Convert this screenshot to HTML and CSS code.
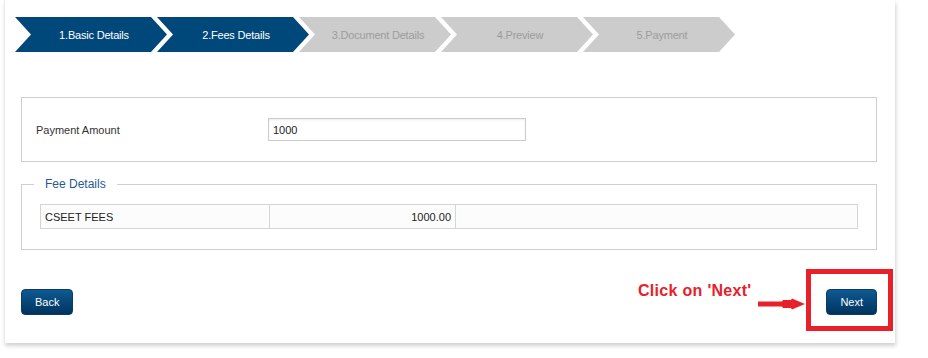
FILE: index.html
```html
<!DOCTYPE html>
<html>
<head>
<meta charset="utf-8">
<link rel="stylesheet" href="styles.css">
</head>
<body>
<div class="card">
  <div class="stepper">
    <div class="step done">1.Basic Details</div>
    <div class="step done">2.Fees Details</div>
    <div class="step">3.Document Details</div>
    <div class="step">4.Preview</div>
    <div class="step">5.Payment</div>
  </div>

  <div class="panel amount">
    <label class="amount-label">Payment Amount</label>
    <input class="amount-input" type="text" value="1000">
  </div>

  <fieldset class="fees">
    <legend class="fees-legend">Fee Details</legend>
    <table class="fees-table">
      <tr>
        <td class="c-name">CSEET FEES</td>
        <td class="c-amt">1000.00</td>
        <td class="c-extra"></td>
      </tr>
    </table>
  </fieldset>

  <div class="actions">
    <button class="btn">Back</button>
    <button class="btn">Next</button>
  </div>
</div>

<div class="callout-text">Click on 'Next'</div>
<svg class="callout-arrow" width="48" height="14" viewBox="0 0 48 14">
  <polygon points="0,4.5 24,4.5 25,3 33,3 34,1.5 47,7 34,12.5 33,11 25,11 24,9.5 0,9.5" fill="#e8202a"/>
</svg>
<div class="callout-box"></div>
</body>
</html>
```

FILE: styles.css
```css
html, body {
  margin: 0;
  padding: 0;
  background: #ffffff;
}

body {
  position: relative;
  width: 928px;
  height: 358px;
  overflow: hidden;
  font-family: "Liberation Sans", Arial, sans-serif;
  font-size: 11px;
  color: #333;
}

.card {
  box-sizing: border-box;
  width: 891px;
  margin-left: 4px;
  padding: 17px 18px 28px 16px;
  background: #fff;
  border-left: 1px solid #ececec;
  box-shadow: 1px 3px 4px rgba(0, 0, 0, 0.18);
}

/* stepper */
.stepper {
  display: flex;
  height: 35px;
  margin-left: -6px;
}

.step {
  width: 152px;
  height: 35px;
  flex: 0 0 152px;
  display: flex;
  align-items: center;
  justify-content: center;
  padding-left: 6px;
  box-sizing: border-box;
  background: #cccccc;
  color: #9c9c9c;
  font-size: 11px;
  letter-spacing: -0.2px;
  clip-path: polygon(0 0, 136px 0, 152px 50%, 136px 100%, 0 100%, 16px 50%);
}

.step + .step {
  margin-left: -10px;
}

.step.done {
  background: #00477a;
  color: #ffffff;
}

/* payment amount */
.panel {
  box-sizing: border-box;
  border: 1px solid #cfcfcf;
  margin-top: 45px;
}

.amount {
  height: 65px;
  display: flex;
  align-items: center;
  padding-left: 14px;
}

.amount-label {
  width: 232px;
  color: #333;
  font-size: 11px;
}

.amount-input {
  box-sizing: border-box;
  width: 258px;
  height: 23px;
  border: 1px solid #cccccc;
  box-shadow: inset 0 1px 2px rgba(0, 0, 0, 0.08);
  padding: 0 4px;
  font-family: "Liberation Sans", Arial, sans-serif;
  font-size: 11px;
  color: #222;
  outline: none;
}

/* fee details */
.fees {
  margin: 15px 0 0 0;
  padding: 13px 18px 20px 18px;
  border: 1px solid #cfcfcf;
}

.fees-legend {
  margin-left: -6px;
  padding: 0 11px;
  color: #1f5a96;
  font-size: 12px;
  line-height: 14px;
}

.fees-table {
  width: 100%;
  border-collapse: collapse;
  background: #fcfcfc;
}

.fees-table td {
  height: 23px;
  border: 1px solid #d5d5d5;
  padding: 0 4px;
  font-size: 11px;
  color: #222;
}

.c-name { width: 220px; }
.c-amt { width: 177px; text-align: right; }

/* actions */
.actions {
  display: flex;
  justify-content: space-between;
  margin-top: 39px;
}

.btn {
  height: 26px;
  padding: 0 13px;
  border: 1px solid #0b3b66;
  border-radius: 4px;
  background: linear-gradient(#0d5a92, #01335e);
  color: #fff;
  font-family: "Liberation Sans", Arial, sans-serif;
  font-size: 11px;
  cursor: pointer;
}

/* annotation overlays */
.callout-text {
  position: absolute;
  left: 638px;
  top: 282px;
  color: #e8202a;
  font-weight: bold;
  font-size: 16px;
  letter-spacing: 0.3px;
}

.callout-arrow {
  position: absolute;
  left: 758px;
  top: 297px;
}

.callout-box {
  position: absolute;
  left: 806px;
  top: 269px;
  width: 87px;
  height: 62px;
  box-sizing: border-box;
  border: 5px solid #e8202a;
}
```
